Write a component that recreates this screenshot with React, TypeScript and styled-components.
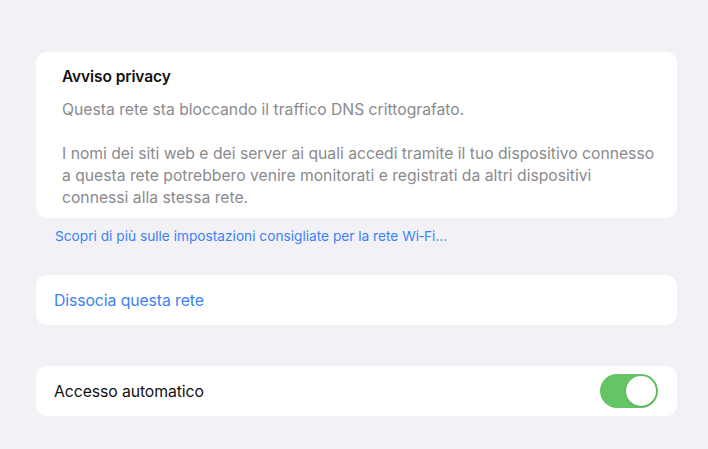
import React from "react";
import styled, { createGlobalStyle } from "styled-components";

const Global = createGlobalStyle`
  html, body { margin: 0; padding: 0; background: #f1f1f6; }
  body { font-family: Inter, "Noto Sans", sans-serif; -webkit-font-smoothing: antialiased; }
`;

const Page = styled.div`
  width: 708px;
  height: 449px;
  background: #f1f1f6;
  box-sizing: border-box;
  padding: 52px 31px 0 36px;
  display: flex;
  flex-direction: column;
`;

const Card = styled.div<{ $mt?: number }>`
  background: #ffffff;
  border-radius: 11px;
  margin-top: ${(p) => p.$mt ?? 0}px;
`;

const NoticeBody = styled.div`
  padding: 15px 8px 9px 26px;
  display: flex;
  flex-direction: column;
`;

const Title = styled.div`
  font-size: 15.5px;
  font-weight: 600;
  color: #111;
  line-height: 20px;
  letter-spacing: -0.1px;
`;

const Para = styled.p<{ $mt: number }>`
  margin: ${(p) => p.$mt}px 0 0 0;
  font-size: 15.7px;
  line-height: 22px;
  color: #8a8a8e;
  letter-spacing: 0;
  white-space: nowrap;
`;

const FooterLink = styled.div`
  margin: 9px 0 0 19px;
  font-size: 13.7px;
  line-height: 18px;
  color: #3b82f6;
`;

const Row = styled.div`
  height: 50px;
  padding: 0 18px;
  display: flex;
  align-items: center;
  justify-content: space-between;
`;

const RowLabel = styled.span<{ $blue?: boolean }>`
  font-size: 15.8px;
  color: ${(p) => (p.$blue ? "#3b82f6" : "#111")};
  letter-spacing: -0.1px;
`;

const Switch = styled.div<{ $on: boolean }>`
  width: 58px;
  height: 34px;
  margin-right: 1px;
  border-radius: 17px;
  background: ${(p) => (p.$on ? "#65c466" : "#e5e5ea")};
  position: relative;
  flex: none;
`;

const Knob = styled.div<{ $on: boolean }>`
  position: absolute;
  top: 2px;
  left: ${(p) => (p.$on ? "26px" : "2px")};
  width: 30px;
  height: 30px;
  border-radius: 50%;
  background: #fff;
  box-shadow: 0 1px 3px rgba(0, 0, 0, 0.15);
`;

export default function App() {
  return (
    <>
      <Global />
      <Page>
        <Card>
          <NoticeBody>
            <Title>Avviso privacy</Title>
            <Para $mt={12}>Questa rete sta bloccando il traffico DNS crittografato.</Para>
            <Para $mt={22}>
              I nomi dei siti web e dei server ai quali accedi tramite il tuo dispositivo connesso
              <br />
              a questa rete potrebbero venire monitorati e registrati da altri dispositivi
              <br />
              connessi alla stessa rete.
            </Para>
          </NoticeBody>
        </Card>
        <FooterLink>Scopri di più sulle impostazioni consigliate per la rete Wi‑Fi…</FooterLink>
        <Card $mt={30}>
          <Row>
            <RowLabel $blue>Dissocia questa rete</RowLabel>
          </Row>
        </Card>
        <Card $mt={41}>
          <Row>
            <RowLabel>Accesso automatico</RowLabel>
            <Switch $on>
              <Knob $on />
            </Switch>
          </Row>
        </Card>
      </Page>
    </>
  );
}
